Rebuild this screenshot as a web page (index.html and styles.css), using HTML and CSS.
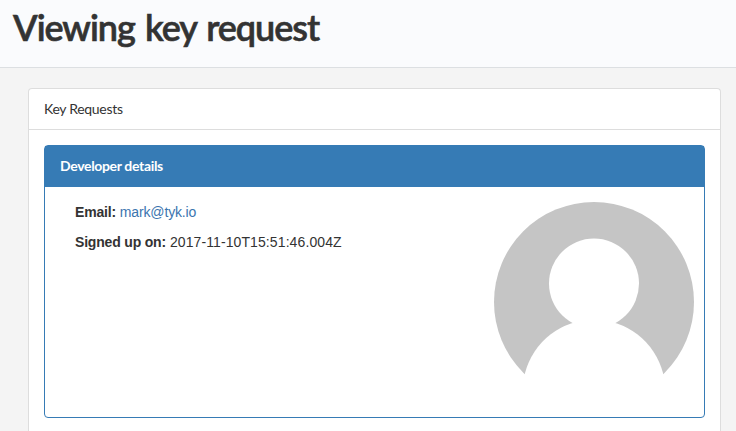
FILE: index.html
```html
<!DOCTYPE html>
<html lang="en">
<head>
<meta charset="utf-8">
<title>Viewing key request</title>
<link rel="stylesheet" href="styles.css">
</head>
<body>
<header class="page-header"><h1>Viewing key request</h1></header>
<main class="panel">
  <h2 class="panel-heading">Key Requests</h2>
  <div class="panel-body">
    <section class="details">
      <h3 class="details-heading">Developer details</h3>
      <div class="details-body">
        <div class="fields">
          <p><strong>Email:</strong> <a href="#">mark@tyk.io</a></p>
          <p><strong>Signed up on:</strong> <span class="date">2017-11-10T15:51:46.004Z</span></p>
        </div>
        <svg class="avatar" viewBox="0 0 200 200" aria-hidden="true">
          <circle cx="100" cy="100" r="100" fill="#c5c5c5"/>
          <circle cx="100" cy="81.5" r="45" fill="#fff"/>
          <path d="M31 171A71.3 71.3 0 0 1 169 171V201H31Z" fill="#fff"/>
        </svg>
      </div>
    </section>
  </div>
</main>
</body>
</html>
```

FILE: styles.css
```css
* { box-sizing: border-box; }
body {
  display: flex;
  flex-direction: column;
  height: 100vh;
  margin: 0;
  background: #f4f4f4;
  color: #333;
  font: 14px/20px "Liberation Sans", Arial, sans-serif;
}
h1, h2, h3, p { margin: 0; }
.page-header {
  flex: none;
  height: 68px;
  padding: 7px 13px 0;
  background: #fafbfd;
  border-bottom: 1px solid #dcdfe2;
}
.page-header h1 {
  font: 600 36px/40px Lato, sans-serif;
  letter-spacing: -1.05px;
  word-spacing: 2.2px;
  -webkit-text-stroke: 0.6px #333;
  white-space: nowrap;
}
.panel {
  flex: 1;
  margin: 20px 15px 0 28px;
  background: #fff;
  border: 1px solid #ddd;
  border-bottom: 0;
  border-radius: 4px 4px 0 0;
}
.panel-heading {
  height: 41px;
  padding: 10px 15px;
  border-bottom: 1px solid #ddd;
  font: 400 14px/20px Lato, sans-serif;
  letter-spacing: -0.3px;
}
.panel-body { padding: 15px 15px 0; }
.details {
  height: 273px;
  border: 1px solid #367bb5;
  border-radius: 4px;
}
.details-heading {
  height: 41px;
  padding: 10px 15px;
  background: #367bb5;
  color: #fff;
  font: 700 14px/20px Lato, sans-serif;
  letter-spacing: -0.34px;
}
.details-body {
  display: flex;
  justify-content: space-between;
  padding: 15px 10px 0 30px;
}
.fields p { margin-bottom: 10px; }
.fields strong { letter-spacing: -0.18px; }
.fields a { color: #3b75af; text-decoration: none; letter-spacing: -0.15px; }
.date { letter-spacing: 0.1px; }
.avatar { display: block; width: 200px; height: 200px; }
```
